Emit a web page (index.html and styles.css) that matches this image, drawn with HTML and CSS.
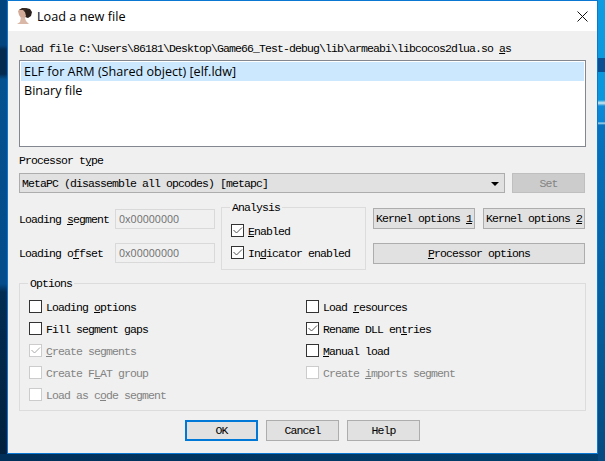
FILE: index.html
```html
<!DOCTYPE html>
<html lang="en">
<head>
    <meta charset="UTF-8">
    <meta name="viewport" content="width=device-width, initial-scale=1.0">
    <title>Load a new file</title>
    <link rel="stylesheet" href="styles.css">
</head>
<body>
    <div class="window">
        <div class="titlebar">
            <svg class="app-icon" width="16" height="16" viewBox="0 0 16 16">
                <path d="M7 2 L10 0 L14 1 L16 4 L15 8 L12 10 L9 9 Z" fill="#2a211d"/>
                <path d="M2 3 L4 1 L7 1 L9 4 L10 8 L8 11 L5 10 L3 7 Z" fill="#d2aa98"/>
                <path d="M1 16 L4 14 L5 9 L9 10 L10 13 L13 16 Z" fill="#d9b8a8"/>
                <path d="M3 2 L6 0 L10 0 L9 4 L7 2 L4 2 Z" fill="#3a2a24"/>
            </svg>
            <span class="title">Load a new file</span>
            <svg class="close-icon" width="11" height="11" viewBox="0 0 11 11">
                <path d="M0.5 0.5 L10.5 10.5 M10.5 0.5 L0.5 10.5" stroke="#111" stroke-width="1" fill="none"/>
            </svg>
        </div>
        <div class="content">
            <div class="label file-label">Load file C:\Users\86181\Desktop\Game66_Test-debug\lib\armeabi\libcocos2dlua.so <u>a</u>s</div>
            <div class="listbox">
                <div class="list-item selected">ELF for ARM (Shared object) [elf.ldw]</div>
                <div class="list-item">Binary file</div>
            </div>
            <div class="label type-label">Processor t<u>y</u>pe</div>
            <div class="processor-row">
                <div class="combo">
                    <span>MetaPC (disassemble all opcodes) [metapc]</span>
                    <span class="combo-arrow"></span>
                </div>
                <button class="button set-button" disabled>Set</button>
            </div>
            <div class="middle-row">
                <div class="loading-fields">
                    <div class="field">
                        <span class="label field-label">Loading <u>s</u>egment</span>
                        <div class="input">0x00000000</div>
                    </div>
                    <div class="field">
                        <span class="label field-label">Loading o<u>f</u>fset</span>
                        <div class="input">0x00000000</div>
                    </div>
                </div>
                <div class="group analysis">
                    <span class="legend">Analysis</span>
                    <div class="check"><span class="box checked"><svg viewBox="0 0 11 11"><path d="M1.5 5 L4.5 8 L10 2.5" fill="none" stroke="#555" stroke-width="1"/></svg></span><u>E</u>nabled</div>
                    <div class="check"><span class="box checked"><svg viewBox="0 0 11 11"><path d="M1.5 5 L4.5 8 L10 2.5" fill="none" stroke="#555" stroke-width="1"/></svg></span>In<u>d</u>icator enabled</div>
                </div>
                <div class="kernel-buttons">
                    <button class="button">Kernel options <u>1</u></button>
                    <button class="button">Kernel options <u>2</u></button>
                    <button class="button wide"><u>P</u>rocessor options</button>
                </div>
            </div>
            <div class="group options">
                <span class="legend">Options</span>
                <div class="check"><span class="box"></span>Loading <u>o</u>ptions</div>
                <div class="check"><span class="box"></span>Load <u>r</u>esources</div>
                <div class="check"><span class="box"></span>Fill segment <u>g</u>aps</div>
                <div class="check"><span class="box checked"><svg viewBox="0 0 11 11"><path d="M1.5 5 L4.5 8 L10 2.5" fill="none" stroke="#555" stroke-width="1"/></svg></span>Rename DLL en<u>t</u>ries</div>
                <div class="check disabled"><span class="box checked"><svg viewBox="0 0 11 11"><path d="M1.5 5 L4.5 8 L10 2.5" fill="none" stroke="#aaa" stroke-width="1"/></svg></span><u>C</u>reate segments</div>
                <div class="check"><span class="box"></span><u>M</u>anual load</div>
                <div class="check disabled"><span class="box"></span>Create F<u>L</u>AT group</div>
                <div class="check disabled"><span class="box"></span>Create <u>i</u>mports segment</div>
                <div class="check disabled"><span class="box"></span>Load as c<u>o</u>de segment</div>
            </div>
            <div class="dialog-buttons">
                <button class="button default">OK</button>
                <button class="button">Cancel</button>
                <button class="button">Help</button>
            </div>
        </div>
    </div>
</body>
</html>
```

FILE: styles.css
```css
body {
    margin: 0;
    height: 461px;
    overflow: hidden;
    background-color: #02203f;
    background-image:
        linear-gradient(180deg, transparent 58px, #0a4f92 58px, #0a4f92 72px, transparent 72px),
        linear-gradient(180deg, #0f9ce0 0, #0a96dc 100px, #d0e8f0 103px, #0a8ad8 106px, #0a84d4 122px, #b8dcec 123px, #0672bf 125px, #05609f 300px, #054a80 461px),
        linear-gradient(90deg, #01305a 0, #01406f 605px),
        linear-gradient(180deg, #02447e 0, #02447e 45px, #042a50 50px, #042a50 74px, #05508f 79px, #044c8a 284px, #022c52 292px, #01203d 461px);
    background-repeat: no-repeat;
    background-size: 7px 461px, 7px 461px, 605px 7px, 7px 461px;
    background-position: right top, right top, left bottom, left top;
    font-family: "Liberation Mono", monospace;
    font-size: 12px;
    color: #000;
}
.window {
    box-sizing: border-box;
    margin-left: 7px;
    width: 591px;
    height: 454px;
    border: 1px solid #0a78d2;
    background: #f0f0f0;
    display: flex;
    flex-direction: column;
}
.titlebar {
    height: 30px;
    background: #fff;
    display: flex;
    align-items: center;
    padding: 0 9px 0 8px;
    flex-shrink: 0;
}
.app-icon {
    margin-right: 5px;
}
.title {
    font-family: "Open Sans", sans-serif;
    font-size: 12.7px;
    flex: 1;
}
.content {
    padding: 0 11px;
}
.label, .check, .legend, .button, .combo {
    font-family: "Liberation Mono", monospace;
    font-size: 11.5px;
    letter-spacing: -0.9px;
}
.file-label {
    height: 29px;
    line-height: 35px;
}
.listbox {
    box-sizing: border-box;
    height: 87px;
    width: 567px;
    border: 1px solid #828790;
    background: #fff;
    padding: 1px;
    font-family: "Open Sans", sans-serif;
    font-size: 12.6px;
}
.list-item {
    height: 19px;
    line-height: 19px;
    padding-left: 3px;
}
.selected {
    background: #cce8ff;
}
.type-label {
    height: 26px;
    line-height: 27px;
}
.processor-row {
    display: flex;
    gap: 7px;
    height: 20px;
}
.combo {
    box-sizing: border-box;
    width: 486px;
    border: 1px solid #adadad;
    background: #e1e1e1;
    display: flex;
    align-items: center;
    justify-content: space-between;
    padding: 1px 5px 0 2px;
}
.combo-arrow {
    width: 0;
    height: 0;
    border-left: 4px solid transparent;
    border-right: 4px solid transparent;
    border-top: 4px solid #000;
}
.button {
    box-sizing: border-box;
    border: 1px solid #adadad;
    background: #e1e1e1;
    color: #000;
    padding: 0;
    height: 21px;
    white-space: nowrap;
}
.set-button {
    width: 73px;
    height: 20px;
    padding-top: 1px;
    background: #ccc;
    border-color: #bfbfbf;
    color: #838383;
}
.middle-row {
    display: flex;
    margin-top: 14px;
    height: 63px;
}
.loading-fields {
    width: 196px;
    padding-top: 2px;
    display: flex;
    flex-direction: column;
    gap: 14px;
    margin-right: 6px;
}
.field {
    display: flex;
    align-items: center;
    height: 20px;
}
.field-label {
    width: 96px;
}
.input {
    box-sizing: border-box;
    width: 100px;
    height: 20px;
    line-height: 18px;
    border: 1px solid #d9d9d9;
    padding-left: 3px;
    font-family: "Open Sans", sans-serif;
    font-size: 10.6px;
    color: #6d6d6d;
}
.group {
    box-sizing: border-box;
    border: 1px solid #dcdcdc;
    position: relative;
}
.legend {
    position: absolute;
    top: -8px;
    left: 8px;
    background: #f0f0f0;
    padding: 0 2px;
    line-height: 15px;
}
.analysis {
    width: 145px;
    padding: 16px 0 0 9px;
    display: flex;
    flex-direction: column;
    gap: 9px;
}
.check {
    display: flex;
    align-items: flex-start;
    height: 13px;
    line-height: 15px;
    white-space: pre;
}
.box {
    box-sizing: border-box;
    width: 13px;
    height: 13px;
    border: 1px solid #333;
    background: #fff;
    margin-right: 4px;
    flex-shrink: 0;
    display: block;
}
.box svg {
    display: block;
    width: 11px;
    height: 11px;
}
.disabled {
    color: #838383;
}
.disabled .box {
    border-color: #ccc;
}
.kernel-buttons {
    width: 212px;
    margin-left: 7px;
    padding-top: 1px;
    display: grid;
    grid-template-columns: 102px 102px;
    grid-template-rows: 21px 21px;
    column-gap: 8px;
    row-gap: 14px;
}
.wide {
    grid-column: 1 / 3;
}
.options {
    width: 567px;
    height: 128px;
    margin-top: 13px;
    padding: 16px 0 0 9px;
    display: grid;
    grid-template-columns: 277px 1fr;
    grid-auto-rows: 13px;
    row-gap: 9px;
}
.dialog-buttons {
    display: flex;
    justify-content: center;
    gap: 8px;
    margin-top: 9px;
}
.dialog-buttons .button {
    width: 73px;
}
.default {
    border: 2px solid #0078d7;
}
```
